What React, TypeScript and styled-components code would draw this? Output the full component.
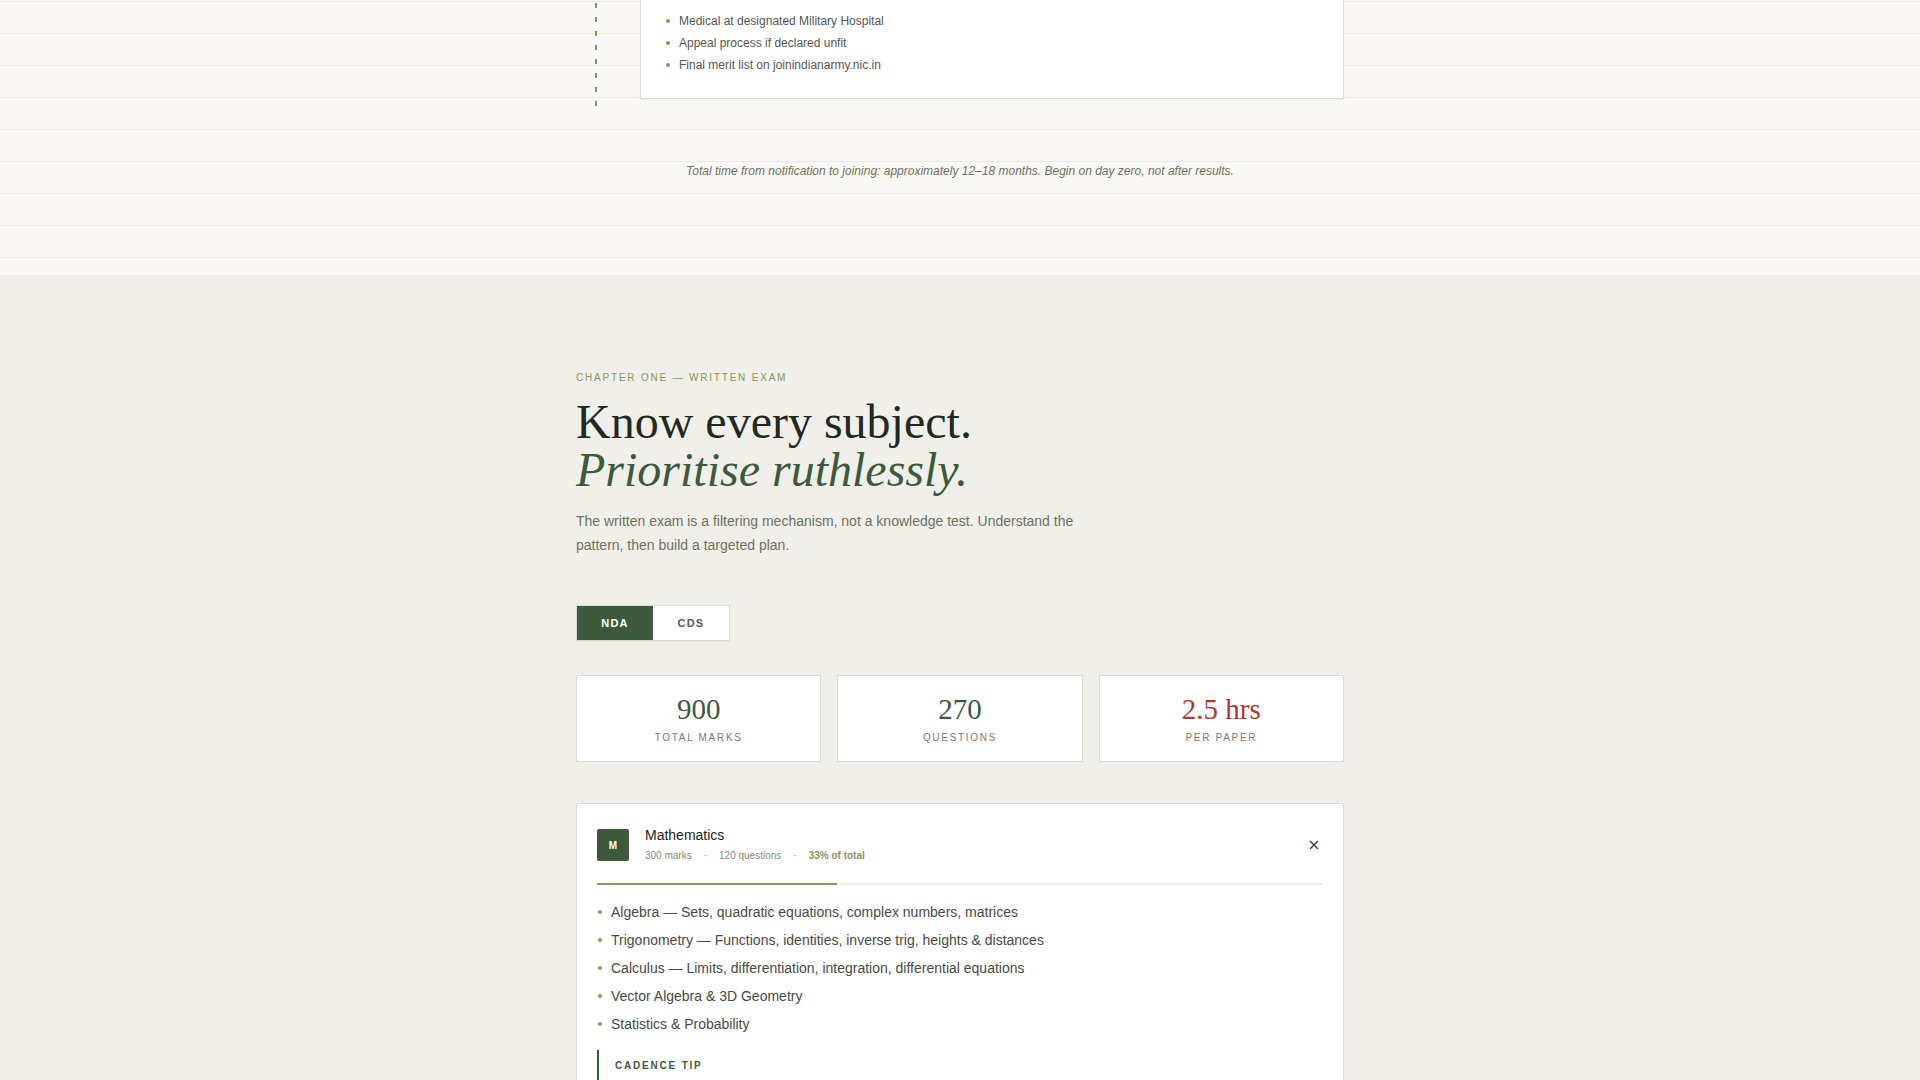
import { useState } from "react";
import styled, { createGlobalStyle } from "styled-components";

const GlobalStyle = createGlobalStyle`
  * {
    box-sizing: border-box;
  }
  body {
    margin: 0;
    background: #f0efea;
    font-family: "Liberation Sans", Arial, sans-serif;
    color: #2b2b26;
  }
`;

const palette = {
  forest: "#3d5a3d",
  olive: "#8a9560",
  ink: "#1f2a22",
  muted: "#6f735c",
  rule: "#dcdbd3",
  red: "#b0382c",
};

// Lined "notebook" strip that holds the end of the timeline
const TimelineSection = styled.section`
  background-color: #f9f8f4;
  background-image: linear-gradient(#ebe9e2 1px, transparent 1px);
  background-size: 100% 32px;
  background-position: 0 1px;
  padding-bottom: 96px;
`;

const Container = styled.div`
  max-width: 768px;
  margin: 0 auto;
`;

const TimelineItem = styled.div`
  display: grid;
  grid-template-columns: 64px 1fr;
`;

// Dashed connector running down the left of each stage
const Rail = styled.div`
  width: 2px;
  margin-left: 19px;
  background: repeating-linear-gradient(
    to bottom,
    ${palette.olive} 0 5px,
    transparent 5px 14px
  );
  background-position: 0 3px;
`;

const StageCard = styled.div`
  background: #ffffff;
  border: 1px solid ${palette.rule};
  border-top: none;
  box-shadow: 0 1px 2px rgba(0, 0, 0, 0.04);
  padding: 10px 24px 22px;
  margin-bottom: 8px;
`;

const DotList = styled.ul<{ $size: number; $line: number; $color: string }>`
  list-style: none;
  margin: 0;
  padding: 0;
  li {
    position: relative;
    padding-left: 14px;
    font-size: ${(p) => p.$size}px;
    line-height: ${(p) => p.$line}px;
    color: ${(p) => p.$color};
  }
  li::before {
    content: "";
    position: absolute;
    left: 1px;
    top: ${(p) => p.$line / 2 - 2}px;
    width: 4px;
    height: 4px;
    border-radius: 50%;
    background: ${palette.olive};
  }
`;

const Note = styled.p`
  margin: 56px 0 0;
  text-align: center;
  font-size: 12px;
  line-height: 16px;
  font-style: italic;
  color: ${palette.muted};
`;

const ExamSection = styled.section`
  background: #f0efea;
  padding: 96px 0 80px;
`;

const Eyebrow = styled.div`
  font-size: 10px;
  line-height: 14px;
  letter-spacing: 1.8px;
  text-transform: uppercase;
  color: ${palette.olive};
`;

const Headline = styled.h2`
  margin: 13px 0 0;
  font-family: "Liberation Serif", "Times New Roman", serif;
  font-weight: 400;
  font-size: 48px;
  line-height: 48px;
  color: ${palette.ink};
  em {
    display: block;
    color: ${palette.forest};
  }
`;

const Lede = styled.p`
  margin: 15px 0 0;
  max-width: 520px;
  font-size: 14px;
  line-height: 24px;
  color: ${palette.muted};
`;

const Tabs = styled.div`
  display: inline-flex;
  margin-top: 48px;
  border: 1px solid ${palette.rule};
  background: #ffffff;
  box-shadow: 0 1px 1px rgba(0, 0, 0, 0.03);
`;

const Tab = styled.button<{ $active?: boolean }>`
  width: 76px;
  height: 34px;
  border: none;
  cursor: pointer;
  font-family: inherit;
  font-size: 11px;
  font-weight: 700;
  letter-spacing: 1.2px;
  background: ${(p) => (p.$active ? palette.forest : "#ffffff")};
  color: ${(p) => (p.$active ? "#ffffff" : "#5b5b52")};
`;

const StatGrid = styled.div`
  display: grid;
  grid-template-columns: repeat(3, 1fr);
  gap: 16px;
  margin-top: 34px;
`;

const StatCard = styled.div`
  background: #ffffff;
  border: 1px solid ${palette.rule};
  padding: 18px 16px 16px;
  text-align: center;
`;

const StatValue = styled.div<{ $accent?: boolean }>`
  font-family: "Liberation Serif", "Times New Roman", serif;
  font-size: 29px;
  line-height: 30px;
  color: ${(p) => (p.$accent ? palette.red : palette.forest)};
`;

const StatLabel = styled.div`
  margin-top: 7px;
  font-size: 10px;
  line-height: 14px;
  letter-spacing: 1.7px;
  text-transform: uppercase;
  color: #7a7a6e;
`;

const SubjectCard = styled.div`
  margin-top: 41px;
  background: #ffffff;
  border: 1px solid ${palette.rule};
  padding: 23px 20px 20px;
`;

const SubjectHeader = styled.div`
  display: flex;
  align-items: center;
  gap: 16px;
`;

const Badge = styled.div`
  flex: none;
  width: 32px;
  height: 32px;
  border-radius: 2px;
  background: ${palette.forest};
  color: #ffffff;
  font-size: 10px;
  font-weight: 700;
  display: flex;
  align-items: center;
  justify-content: center;
`;

const SubjectInfo = styled.div`
  flex: 1;
`;

const SubjectTitle = styled.div`
  font-size: 14px;
  line-height: 16px;
  color: #222222;
`;

const SubjectMeta = styled.div`
  margin-top: 6px;
  font-size: 10px;
  line-height: 14px;
  color: #8a8a80;
  display: flex;
  gap: 12px;
  b {
    color: ${palette.olive};
  }
`;

const CloseButton = styled.button`
  border: none;
  background: none;
  padding: 0;
  width: 16px;
  height: 16px;
  margin-right: 1px;
  color: #2f3f2f;
  cursor: pointer;
  display: flex;
  align-items: center;
  justify-content: center;
`;

const Progress = styled.div`
  margin: 20px 0 13px;
  height: 2px;
  background: #eeede8;
`;

const ProgressFill = styled.div`
  height: 100%;
  background: ${palette.olive};
`;

const Tip = styled.div`
  margin-top: 12px;
  border-left: 2px solid ${palette.forest};
  padding: 9px 0 8px 16px;
`;

const TipLabel = styled.div`
  font-size: 10px;
  line-height: 14px;
  font-weight: 700;
  letter-spacing: 1.8px;
  color: ${palette.forest};
`;

const TipText = styled.p`
  margin: 14px 0 0;
  font-size: 13px;
  line-height: 22px;
  color: #5b5b52;
`;

const exams = {
  NDA: {
    stats: [
      { value: "900", label: "Total marks" },
      { value: "270", label: "Questions" },
      { value: "2.5 hrs", label: "Per paper", accent: true },
    ],
    subject: {
      initial: "M",
      name: "Mathematics",
      marks: 300,
      questions: 120,
      share: 33,
      topics: [
        "Algebra — Sets, quadratic equations, complex numbers, matrices",
        "Trigonometry — Functions, identities, inverse trig, heights & distances",
        "Calculus — Limits, differentiation, integration, differential equations",
        "Vector Algebra & 3D Geometry",
        "Statistics & Probability",
      ],
      tip: "Solve one full previous-year paper every Sunday under timed conditions.",
    },
  },
  CDS: {
    stats: [
      { value: "300", label: "Total marks" },
      { value: "320", label: "Questions" },
      { value: "2 hrs", label: "Per paper", accent: true },
    ],
    subject: {
      initial: "E",
      name: "English",
      marks: 100,
      questions: 120,
      share: 33,
      topics: [
        "Reading comprehension",
        "Synonyms & antonyms",
        "Sentence improvement & ordering",
        "Spotting errors",
        "Fill in the blanks",
      ],
      tip: "Read one editorial a day and note every unfamiliar word.",
    },
  },
};

type ExamKey = keyof typeof exams;

const App = (): JSX.Element => {
  const [exam, setExam] = useState<ExamKey>("NDA");
  const data = exams[exam];
  const subject = data.subject;

  return (
    <>
      <GlobalStyle />
      <TimelineSection>
        <Container>
          <TimelineItem>
            <Rail />
            <StageCard>
              <DotList $size={12} $line={22} $color="#555550">
                <li>Medical at designated Military Hospital</li>
                <li>Appeal process if declared unfit</li>
                <li>Final merit list on joinindianarmy.nic.in</li>
              </DotList>
            </StageCard>
          </TimelineItem>
          <Note>
            Total time from notification to joining: approximately 12–18
            months. Begin on day zero, not after results.
          </Note>
        </Container>
      </TimelineSection>

      <ExamSection>
        <Container>
          <Eyebrow>Chapter One — Written Exam</Eyebrow>
          <Headline>
            Know every subject.
            <em>Prioritise ruthlessly.</em>
          </Headline>
          <Lede>
            The written exam is a filtering mechanism, not a knowledge test.
            Understand the pattern, then build a targeted plan.
          </Lede>

          <Tabs>
            {(Object.keys(exams) as ExamKey[]).map((key) => (
              <Tab key={key} $active={key === exam} onClick={() => setExam(key)}>
                {key}
              </Tab>
            ))}
          </Tabs>

          <StatGrid>
            {data.stats.map((stat) => (
              <StatCard key={stat.label}>
                <StatValue $accent={stat.accent}>{stat.value}</StatValue>
                <StatLabel>{stat.label}</StatLabel>
              </StatCard>
            ))}
          </StatGrid>

          <SubjectCard>
            <SubjectHeader>
              <Badge>{subject.initial}</Badge>
              <SubjectInfo>
                <SubjectTitle>{subject.name}</SubjectTitle>
                <SubjectMeta>
                  <span>{subject.marks} marks</span>
                  <span>·</span>
                  <span>{subject.questions} questions</span>
                  <span>·</span>
                  <b>{subject.share}% of total</b>
                </SubjectMeta>
              </SubjectInfo>
              <CloseButton aria-label="Collapse">
                <svg width="10" height="10" viewBox="0 0 10 10">
                  <path
                    d="M1 1 L9 9 M9 1 L1 9"
                    stroke="currentColor"
                    strokeWidth="1.3"
                    fill="none"
                  />
                </svg>
              </CloseButton>
            </SubjectHeader>
            <Progress>
              <ProgressFill style={{ width: `${subject.share}%` }} />
            </Progress>
            <DotList $size={14} $line={28} $color="#4a4a42">
              {subject.topics.map((topic) => (
                <li key={topic}>{topic}</li>
              ))}
            </DotList>
            <Tip>
              <TipLabel>CADENCE TIP</TipLabel>
              <TipText>{subject.tip}</TipText>
            </Tip>
          </SubjectCard>
        </Container>
      </ExamSection>
    </>
  );
};

export default App;
